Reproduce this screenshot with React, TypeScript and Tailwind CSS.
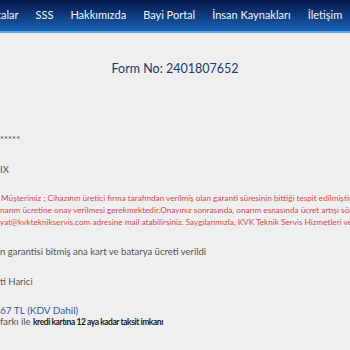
import React from "react";

export default function App() {
  const font = { fontFamily: "Lato, 'Noto Sans', sans-serif" };
  return (
    <div className="w-[350px] h-[350px] overflow-hidden bg-[#efefef]" style={font}>
      <div className="h-[31px] bg-gradient-to-b from-[#06164a] to-[#1a64b6] flex items-center overflow-hidden whitespace-nowrap text-[#f4f6fb] text-[11px]">
        <div className="flex gap-[17px] -ml-[3px]">
          <span>talar</span>
          <span>SSS</span>
          <span>Hakkımızda</span>
          <span>Bayi Portal</span>
          <span>İnsan Kaynakları</span>
          <span>İletişim</span>
        </div>
      </div>
      <div className="h-[2px] bg-[#5aa6e6]" />
      <div className="pt-[28px] text-center text-[12.5px] leading-[16px] text-[#20396b]">Form No: 2401807652</div>
      <div className="text-[9.5px] leading-[12px] whitespace-nowrap text-[#555]">
        <div className="mt-[57px]">*****</div>
        <div className="mt-[18px]">IX</div>
        <div className="mt-[16px] text-[8.2px] text-[#d64a4e]">
          <div className="-ml-[3px]">i Müşterimiz ; Cihazının üretici firma tarafından verilmiş olan garanti süresinin bittiği tespit edilmiştir.</div>
          <div>narım ücretine onay verilmesi gerekmektedir.Onayınız sonrasında, onarım esnasında ücret artışı söz konusu olmayacaktır.</div>
          <div>yat@kvkteknikservis.com adresine mail atabilirsiniz. Saygılarımızla, KVK Teknik Servis Hizmetleri ve Ticaret A.Ş.</div>
        </div>
        <div className="mt-[18px]">n garantisi bitmiş ana kart ve batarya ücreti verildi</div>
        <div className="mt-[18px]">ti Harici</div>
        <div className="mt-[16px] text-[10px] text-[#2f5aa6]">67 TL (KDV Dahil)</div>
        <div className="text-[9.5px]">
          farkı ile <span className="text-[8.5px] tracking-[-0.45px] font-bold text-[#222]">kredi kartına 12 aya kadar taksit imkanı</span>
        </div>
      </div>
    </div>
  );
}
